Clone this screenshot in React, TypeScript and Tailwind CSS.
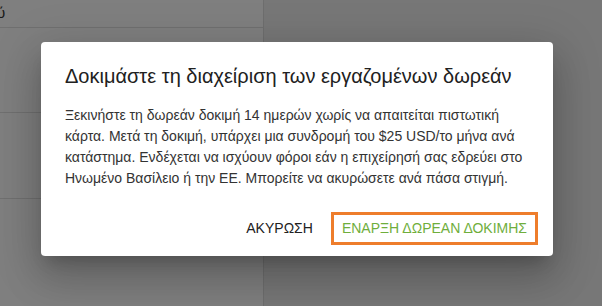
import React from "react";

export default function App() {
  return (
    <div
      className="relative h-[306px] w-[602px] overflow-hidden bg-[#eeeeee]"
      style={{ fontFamily: '"Liberation Sans", Arial, sans-serif' }}
    >
      <div className="flex h-full">
        <div className="flex w-[264px] flex-col border-r border-[#dddddd] bg-white">
          <div className="flex h-[28px] items-center border-b border-[#e0e0e0] text-[15px] text-[#333]">
            <span className="-ml-[3px]">ύ</span>
          </div>
          <div className="h-[85px] border-b border-[#e0e0e0]" />
          <div className="h-[86px] border-b border-[#e0e0e0]" />
          <div className="flex-1" />
        </div>
        <div className="flex-1 bg-[#eeeeee]" />
      </div>

      <div className="absolute inset-0 bg-black/50">
        <div className="ml-[41px] mt-[42px] flex h-[214px] w-[512px] flex-col rounded-[4px] bg-white shadow-[0_11px_15px_-7px_rgba(0,0,0,0.2),0_24px_38px_3px_rgba(0,0,0,0.14),0_9px_46px_8px_rgba(0,0,0,0.12)]">
          <div className="px-6 pt-[18px] text-[20px] leading-[32px] text-[#212121]">
            Δοκιμάστε τη διαχείριση των εργαζομένων δωρεάν
          </div>
          <div className="px-6 pt-[13px] text-[14px] leading-[21px] text-[#333333]">
            Ξεκινήστε τη δωρεάν δοκιμή 14 ημερών χωρίς να απαιτείται πιστωτική
            κάρτα. Μετά τη δοκιμή, υπάρχει μια συνδρομή του $25 USD/το μήνα ανά
            κατάστημα. Ενδέχεται να ισχύουν φόροι εάν η επιχείρησή σας εδρεύει
            στο Ηνωμένο Βασίλειο ή την ΕΕ. Μπορείτε να ακυρώσετε ανά πάσα
            στιγμή.
          </div>
          <div className="mt-auto flex items-center justify-end pb-[11px] pr-[15px]">
            <button className="mr-[10px] flex h-[33px] items-center px-2 text-[14px] text-[#212121]">
              ΑΚΥΡΩΣΗ
            </button>
            <button className="flex h-[33px] items-center border-[3px] border-[#ee7d2b] px-[8px] text-[14px] text-[#6fae3c]">
              ΕΝΑΡΞΗ ΔΩΡΕΑΝ ΔΟΚΙΜΗΣ
            </button>
          </div>
        </div>
      </div>
    </div>
  );
}
